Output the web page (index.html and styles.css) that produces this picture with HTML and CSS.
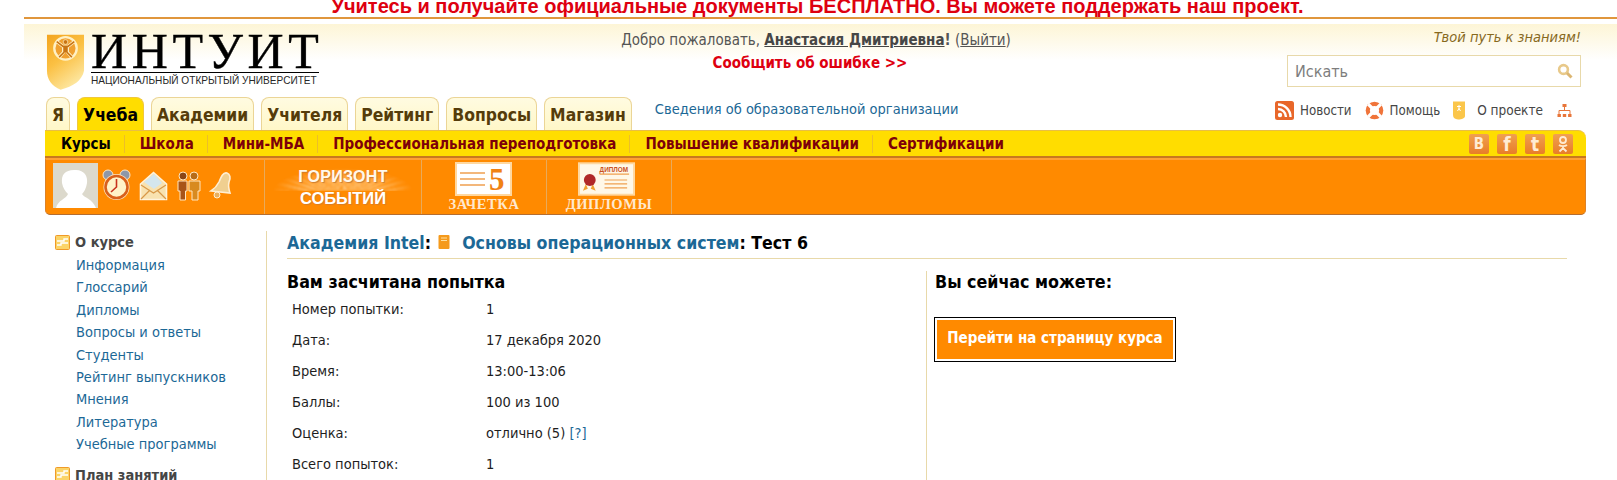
FILE: index.html
```html
<!DOCTYPE html>
<html lang="ru">
    <head>
        <meta charset="UTF-8">
        <meta name="viewport" content="width=device-width, initial-scale=1.0">
        <link rel="stylesheet" href="styles.css">
        <title>ИНТУИТ: Тест 6</title>
    </head>
    <body>
        <!--======================= promo =======================-->
        <div class="promo">Учитесь и получайте официальные документы БЕСПЛАТНО. Вы можете поддержать наш проект.</div>

        <div class="page">
            <!--======================= header =======================-->
            <header class="top">
                <a class="logo" href="#">
                    <svg class="logoShield" viewBox="0 0 40 58">
                        <defs>
                            <linearGradient id="shieldFill" x1="0" y1="0" x2="0.5" y2="1">
                                <stop offset="0" stop-color="#f3a41f"></stop>
                                <stop offset="0.5" stop-color="#fbc043"></stop>
                                <stop offset="1" stop-color="#fde59c"></stop>
                            </linearGradient>
                        </defs>
                        <path d="M1 1 H39 V38 C37 48 28 54 15 57.5 C6 54 1 47 1 38 Z" fill="url(#shieldFill)"></path>
                        <circle cx="20" cy="15" r="11.5" fill="#f0a030" stroke="#fff0c4" stroke-width="2.4"></circle>
                        <circle cx="20" cy="8.5" r="2.4" fill="#c87414" stroke="#fff0c4" stroke-width="0.7"></circle>
                        <path d="M11 8 L17.5 13 H22.5 L29 8 M18 13 V19 L13.5 24 M22 13 V19 L26.5 24" fill="none" stroke="#fff0c4" stroke-width="3.2"></path>
                        <path d="M11 8 L17.5 13 H22.5 L29 8 M18.5 13 V19 L13.5 24 M21.5 13 V19 L26.5 24 M20 12 V19" fill="none" stroke="#c87414" stroke-width="1.6"></path>
                    </svg>
                    <span class="logoText">
                        <span class="logoName">ИНТУИТ</span>
                        <span class="logoSub">НАЦИОНАЛЬНЫЙ ОТКРЫТЫЙ УНИВЕРСИТЕТ</span>
                    </span>
                </a>
                <div class="welcome">
                    <div class="welcomeLine">Добро пожаловать, <a class="userName" href="#">Анастасия Дмитриевна</a><b>!</b> (<a class="logout" href="#">Выйти</a>)</div>
                    <a class="report" href="#">Сообщить об ошибке &gt;&gt;</a>
                </div>
                <div class="topRight">
                    <div class="slogan">Твой путь к знаниям!</div>
                    <div class="search">
                        <span class="searchText">Искать</span>
                        <svg class="searchIcon" viewBox="0 0 16 16"><circle cx="6.5" cy="6.5" r="4.4" fill="none" stroke="#e8c98a" stroke-width="2.6"></circle><path d="M10 10 L14.5 14.5" stroke="#dcb672" stroke-width="3"></path></svg>
                    </div>
                </div>
            </header>

            <!--======================= tabs =======================-->
            <nav class="tabRow">
                <a class="tab tabMe" href="#">Я</a>
                <a class="tab tabActive" href="#">Учеба</a>
                <a class="tab" href="#">Академии</a>
                <a class="tab" href="#">Учителя</a>
                <a class="tab" href="#">Рейтинг</a>
                <a class="tab" href="#">Вопросы</a>
                <a class="tab" href="#">Магазин</a>
                <a class="orgLink" href="#">Сведения об образовательной организации</a>
                <div class="quickLinks">
                    <svg class="quickIcon" viewBox="0 0 19 19"><rect width="19" height="19" rx="2.5" fill="#e8672a"></rect><circle cx="5" cy="14" r="2.2" fill="#fff"></circle><path d="M3 8 A8 8 0 0 1 11 16 M3 3.5 A12.5 12.5 0 0 1 15.5 16" fill="none" stroke="#fff" stroke-width="2.4"></path></svg>
                    <a class="quickLink" href="#">Новости</a>
                    <svg class="quickIcon" viewBox="0 0 19 19"><circle cx="9.5" cy="9.5" r="8.8" fill="#f0743a"></circle><circle cx="9.5" cy="9.5" r="4.6" fill="#fff"></circle><path d="M3.2 3.2 L7 7 M15.8 3.2 L12 7 M3.2 15.8 L7 12 M15.8 15.8 L12 12" stroke="#fff" stroke-width="3.2"></path></svg>
                    <a class="quickLink quickHelp" href="#">Помощь</a>
                    <svg class="quickIcon quickBook" viewBox="0 0 14 19"><path d="M1 0.5 H13 V15 C13 17 10 18.5 6 18.5 C3 18 1 17 1 14 Z" fill="#fbc64a"></path><path d="M7 4 V8 M5 5.5 H9 M5.5 10 L7 7.5 L8.5 10" fill="none" stroke="#fff" stroke-width="1"></path></svg>
                    <a class="quickLink quickAbout" href="#">О проекте</a>
                    <svg class="quickIcon quickMap" viewBox="0 0 15 15"><path d="M7.5 4 V7.5 M2 11 V7.5 H13 V11" fill="none" stroke="#e8763a" stroke-width="1"></path><rect x="5.5" y="1" width="4" height="3" fill="#e8763a"></rect><rect x="0.5" y="11" width="3.4" height="3" fill="#e8763a"></rect><rect x="5.8" y="11" width="3.4" height="3" fill="#e8763a"></rect><rect x="11.1" y="11" width="3.4" height="3" fill="#e8763a"></rect></svg>
                </div>
            </nav>

            <!--======================= yellow menu =======================-->
            <div class="menu">
                <a class="menuItem menuCurrent" href="#">Курсы</a>
                <a class="menuItem" href="#">Школа</a>
                <a class="menuItem" href="#">Мини-МБА</a>
                <a class="menuItem" href="#">Профессиональная переподготовка</a>
                <a class="menuItem" href="#">Повышение квалификации</a>
                <a class="menuItem" href="#">Сертификации</a>
                <div class="social">
                    <a class="socialBtn" href="#">В</a>
                    <a class="socialBtn socialF" href="#">f</a>
                    <a class="socialBtn socialT" href="#">t</a>
                    <a class="socialBtn" href="#">
                        <svg class="okIcon" viewBox="0 0 20 20"><circle cx="10" cy="6" r="3" fill="none" stroke="#ffebd2" stroke-width="1.8"></circle><path d="M6 11 C8 12.5 12 12.5 14 11 M10 12 V14 M6.5 17.5 L10 14 L13.5 17.5" fill="none" stroke="#ffebd2" stroke-width="1.8"></path></svg>
                    </a>
                </div>
            </div>

            <!--======================= orange toolbar =======================-->
            <div class="tools">
                <div class="toolCell toolUser">
                    <svg class="avatar" viewBox="0 0 45 45">
                        <rect width="45" height="45" fill="#dcd9cc"></rect>
                        <path d="M21 7 C31 6 35 13 34 20 C33 26 31 29 29 31 C31 35 39 35 43 45 H3 C5 37 13 36 15 31 C12 28 10 25 9 20 C8 12 12 7 21 7 Z" fill="#fff"></path>
                    </svg>
                    <svg class="toolIcon iconClock" viewBox="0 0 29 33">
                        <circle cx="6" cy="6" r="5" fill="#8d97a8" stroke="#ffe6c0"></circle>
                        <circle cx="23" cy="6" r="5" fill="#8d97a8" stroke="#ffe6c0"></circle>
                        <circle cx="14.5" cy="18" r="13" fill="#ffe6c0"></circle>
                        <circle cx="14.5" cy="18" r="11" fill="#fff2c8" stroke="#d8601c" stroke-width="2.6"></circle>
                        <path d="M14.5 10 V18 L9 23" fill="none" stroke="#c8321e" stroke-width="1.6"></path>
                    </svg>
                    <svg class="toolIcon iconMail" viewBox="0 0 29 30">
                        <path d="M1.5 13 L14.5 1.5 L27.5 13 V28.5 H1.5 Z" fill="#f8e2b0" stroke="#fff3dc" stroke-width="1.6"></path>
                        <path d="M5 11 L15 3 L23 12 L15 18 Z" fill="#d4e6ee"></path>
                        <path d="M2 14 L14.5 22 L27 14 M2 28 L11 19 M27 28 L18 19" fill="none" stroke="#d89848" stroke-width="1.2"></path>
                    </svg>
                    <svg class="toolIcon iconPeople" viewBox="0 0 27 30">
                        <circle cx="8" cy="5" r="4" fill="#8a4616" stroke="#ffe6c0"></circle>
                        <circle cx="19" cy="5" r="4" fill="#b86c18" stroke="#ffe6c0"></circle>
                        <path d="M3 10 H12 V20 H10.5 V29 H5 V20 H3 Z" fill="#a85418" stroke="#ffe6c0"></path>
                        <path d="M14 10 H25 V20 H23 V29 H17 V20 H14 Z" fill="#d88a20" stroke="#ffe6c0"></path>
                    </svg>
                    <svg class="toolIcon iconBell" viewBox="0 0 26 29">
                        <path d="M19 2 C22 3 23 7 21 11 C20 15 21 19 22 22 L3 20 C6 18 9 15 11 11 C13 6 15 1 19 2 Z" fill="#f0cf90" stroke="#ffeed2" stroke-width="1.6"></path>
                        <circle cx="9" cy="24" r="3" fill="#e8b060" stroke="#ffeed2"></circle>
                    </svg>
                </div>
                <a class="toolCell toolHorizon" href="#">
                    <span class="horizonTop">ГОРИЗОНТ</span>
                    <span class="horizonBottom">СОБЫТИЙ</span>
                </a>
                <a class="toolCell toolBook" href="#">
                    <svg class="cardIcon" viewBox="0 0 57 34">
                        <rect x="1" y="1" width="55" height="32" fill="#fff" stroke="#ffd8a0" stroke-width="2"></rect>
                        <path d="M5 11 H30 M5 17 H30 M5 23 H30" stroke="#f0a050" stroke-width="1.5"></path>
                        <text class="cardFive" x="34" y="28">5</text>
                    </svg>
                    <span class="cardLabel">ЗАЧЕТКА</span>
                </a>
                <a class="toolCell toolDiploma" href="#">
                    <svg class="cardIcon" viewBox="0 0 58 34">
                        <rect x="1" y="1" width="56" height="32" fill="#fff8e8" stroke="#ffd8a0" stroke-width="2"></rect>
                        <text class="cardSmall" x="22" y="10">ДИПЛОМ</text>
                        <path d="M22 12 H52 M27 18 H50 M27 22 H50 M27 26 H50" stroke="#f0a050" stroke-width="1.2"></path>
                        <path d="M8 22 L5 29 L10 27 M15 22 L18 29 L13 27" fill="#f0a030"></path>
                        <circle cx="12" cy="18" r="6" fill="#b02828"></circle>
                    </svg>
                    <span class="cardLabel">ДИПЛОМЫ</span>
                </a>
            </div>

            <!--======================= content =======================-->
            <div class="content">
                <aside class="side">
                    <div class="sideHead">
                        <svg class="sideIcon" viewBox="0 0 15 15"><rect x="0.5" y="0.5" width="14" height="14" rx="1" fill="#fbd468" stroke="#f09a28"></rect><path d="M2 6 H9 V4 H13 M2 10 H6 V8 H13" fill="none" stroke="#fff" stroke-width="1.4"></path></svg>
                        <span>О курсе</span>
                    </div>
                    <ul class="sideList">
                        <li><a href="#">Информация</a></li>
                        <li><a href="#">Глоссарий</a></li>
                        <li><a href="#">Дипломы</a></li>
                        <li><a href="#">Вопросы и ответы</a></li>
                        <li><a href="#">Студенты</a></li>
                        <li><a href="#">Рейтинг выпускников</a></li>
                        <li><a href="#">Мнения</a></li>
                        <li><a href="#">Литература</a></li>
                        <li><a href="#">Учебные программы</a></li>
                    </ul>
                    <div class="sideHead">
                        <svg class="sideIcon" viewBox="0 0 15 15"><rect x="0.5" y="0.5" width="14" height="14" rx="1" fill="#fbd468" stroke="#f09a28"></rect><path d="M2 6 H9 V4 H13 M2 10 H6 V8 H13" fill="none" stroke="#fff" stroke-width="1.4"></path></svg>
                        <span>План занятий</span>
                    </div>
                </aside>

                <main class="main">
                    <h1 class="title">
                        <a href="#">Академия Intel</a>:
                        <svg class="titleIcon" viewBox="0 0 12 14"><rect x="0.5" width="11" height="14" rx="1" fill="#f59a1c"></rect><path d="M3 3 H9 M3 5.5 H9" stroke="#ffe0a0"></path></svg>
                        <a href="#">Основы операционных систем</a>: Тест 6
                    </h1>
                    <div class="columns">
                        <section class="attempt">
                            <h2 class="subTitle">Вам засчитана попытка</h2>
                            <div class="attemptGrid">
                                <span>Номер попытки:</span><span>1</span>
                                <span>Дата:</span><span>17 декабря 2020</span>
                                <span>Время:</span><span>13:00-13:06</span>
                                <span>Баллы:</span><span>100 из 100</span>
                                <span>Оценка:</span><span>отлично (5) <a href="#">[?]</a></span>
                                <span>Всего попыток:</span><span>1</span>
                            </div>
                        </section>
                        <section class="actions">
                            <h2 class="subTitle">Вы сейчас можете:</h2>
                            <a class="courseButton" href="#">Перейти на страницу курса</a>
                        </section>
                    </div>
                </main>
            </div>
        </div>
    </body>
</html>
```

FILE: styles.css
```css
html, body{
    height: 480px;
    overflow: hidden;
}

body{
    margin: 0;
    font-family: "DejaVu Sans Condensed", "DejaVu Sans", sans-serif;
    font-size: 14.5px;
    background-color: white;
    color: rgb(34, 34, 34);
}

a{
    text-decoration: none;
    color: rgb(28, 104, 150);
}

/*************************************************************************************************/

/* promo line */
.promo{
    height: 17px;
    line-height: 12px;
    overflow: hidden;
    padding-left: 18px;
    text-align: center;
    font-family: "Liberation Sans", sans-serif;
    font-weight: bold;
    font-size: 20px;
    color: rgb(222, 0, 16);
}

.page{
    margin-left: 24px;
    border-top: 2px solid rgb(224, 150, 60);
    padding-top: 5px;
}

/*************************************************************************************************/

/* header */
.top{
    display: grid;
    grid-template-columns: 299px 1fr 294px;
    height: 73px;
    padding: 0 36px 0 22px;
    background: linear-gradient(to bottom, rgb(253, 245, 214), white 50%);
}

.logo{
    display: flex;
    align-items: flex-start;
    gap: 6px;
    padding-top: 9px;
    color: black;
}

.logoShield{
    width: 39px;
    height: 58px;
}

.logoText{
    display: flex;
    flex-direction: column;
    width: 228px;
}

.logoName{
    font-family: "Liberation Serif", serif;
    font-size: 50px;
    line-height: 36px;
    letter-spacing: 4.6px;
    height: 39px;
    border-bottom: 1px solid black;
    -webkit-text-stroke: 0.4px black;
}

.logoSub{
    font-family: "Liberation Sans", sans-serif;
    font-size: 10.1px;
    line-height: 16px;
    white-space: nowrap;
    color: rgb(40, 40, 40);
}

.welcome{
    text-align: center;
    padding-top: 6px;
}

.welcomeLine{
    line-height: 20px;
    font-size: 15px;
    color: rgb(85, 85, 85);
}

.userName{
    font-weight: bold;
    color: rgb(70, 70, 70);
    text-decoration: underline;
}

.logout{
    color: rgb(85, 85, 85);
    text-decoration: underline;
}

.report{
    display: block;
    margin-top: 3px;
    padding-right: 12px;
    line-height: 20px;
    font-size: 15px;
    font-weight: bold;
    color: rgb(222, 0, 16);
}

.slogan{
    text-align: right;
    font-style: italic;
    line-height: 20px;
    padding-top: 3px;
    color: rgb(135, 105, 30);
}

.search{
    display: flex;
    align-items: center;
    justify-content: space-between;
    box-sizing: border-box;
    height: 32px;
    margin-top: 8px;
    padding: 0 7px;
    background-color: white;
    border: 1px solid rgb(232, 217, 170);
}

.searchText{
    font-size: 16px;
    color: rgb(125, 125, 125);
}

.searchIcon{
    width: 16px;
    height: 16px;
}

/*************************************************************************************************/

/* tabs */
.tabRow{
    display: flex;
    align-items: flex-start;
    height: 33px;
    padding: 0 45px 0 22px;
}

.tab{
    box-sizing: border-box;
    height: 33px;
    margin-right: 7px;
    padding: 0 5px;
    line-height: 34px;
    font-weight: bold;
    font-size: 17.4px;
    color: rgb(85, 60, 10);
    background: linear-gradient(to bottom, rgb(255, 251, 225), rgb(255, 247, 200));
    border: 1px solid rgb(235, 213, 150);
    border-bottom: none;
    border-radius: 8px 8px 0 0;
}

.tabActive{
    color: black;
    background: rgb(255, 221, 0);
    border-color: rgb(240, 200, 60);
}

.orgLink{
    margin-left: 16px;
    line-height: 25px;
}

.quickLinks{
    display: flex;
    align-items: center;
    margin-left: auto;
    height: 26px;
    font-size: 13.2px;
}

.quickIcon{
    width: 19px;
    height: 19px;
}

.quickBook{
    width: 14px;
}

.quickMap{
    width: 15px;
    height: 15px;
    margin-left: 14px;
}

.quickLink{
    margin: 0 13px 0 6px;
    color: rgb(70, 70, 70);
}

.quickHelp{
    margin-right: 12px;
}

.quickAbout{
    margin: 0 0 0 11px;
    font-size: 13.5px;
}

/*************************************************************************************************/

/* yellow menu */
.menu{
    display: flex;
    align-items: center;
    box-sizing: border-box;
    height: 28px;
    margin: 0 31px 0 21px;
    padding-left: 1px;
    background-color: rgb(255, 221, 0);
    border-top: 1px solid rgb(232, 190, 70);
    border-bottom: 2px solid rgb(200, 120, 30);
    border-radius: 0 8px 0 0;
}

.menuItem{
    height: 18px;
    line-height: 18px;
    padding: 0 13px 0 15px;
    font-weight: bold;
    font-size: 15px;
    color: rgb(125, 0, 10);
    border-right: 1px solid rgb(236, 190, 40);
}

.menuCurrent{
    color: black;
}

.menuItem:nth-child(6){
    border-right: none;
}

.social{
    display: flex;
    gap: 8px;
    margin-left: auto;
    margin-right: 13px;
}

.socialBtn{
    display: block;
    width: 20px;
    height: 20px;
    line-height: 20px;
    text-align: center;
    font-weight: bold;
    font-size: 15px;
    color: rgb(255, 235, 210);
    background: linear-gradient(to bottom, rgb(240, 160, 80), rgb(232, 125, 40));
    border-radius: 2px;
}

.socialF{
    font-size: 19px;
}

.socialT{
    font-size: 19px;
}

.okIcon{
    display: block;
    width: 20px;
    height: 20px;
}

/*************************************************************************************************/

/* orange toolbar */
.tools{
    display: flex;
    box-sizing: border-box;
    height: 57px;
    margin: 0 31px 0 21px;
    background-color: rgb(255, 138, 0);
    border-top: 2px solid rgb(255, 160, 50);
    border-left: 1px solid rgb(220, 130, 40);
    border-right: 1px solid rgb(220, 130, 40);
    border-bottom: 1px solid rgb(180, 110, 50);
    border-radius: 0 0 5px 5px;
}

.toolCell{
    box-sizing: border-box;
    height: 54px;
    border-right: 1px solid rgb(232, 170, 90);
}

.toolUser{
    display: flex;
    align-items: center;
    width: 219px;
    padding: 0 0 3px 7px;
}

.avatar{
    width: 45px;
    height: 45px;
    margin-right: 4px;
}

.toolIcon{
    flex: none;
}

.iconClock{
    width: 29px;
    height: 33px;
    margin-right: 8px;
}

.iconMail{
    width: 29px;
    height: 30px;
    margin-right: 7px;
}

.iconPeople{
    width: 27px;
    height: 30px;
    margin-right: 6px;
}

.iconBell{
    width: 26px;
    height: 29px;
}

.toolHorizon{
    position: relative;
    display: flex;
    flex-direction: column;
    align-items: center;
    width: 157px;
    padding-top: 8px;
    font-family: "Liberation Sans", sans-serif;
    font-weight: bold;
    color: white;
}

/* rays behind the horizon title */
.toolHorizon::before{
    content: "";
    position: absolute;
    left: 8px;
    right: 8px;
    top: 4px;
    height: 27px;
    filter: blur(1px);
    background: repeating-conic-gradient(from 270deg at 50% 130%, rgba(255, 235, 200, 0.6) 0deg 3deg, rgba(255, 235, 200, 0.15) 3deg 6deg);
    -webkit-mask-image: radial-gradient(ellipse 50% 85% at 50% 100%, black 50%, transparent 100%);
    mask-image: radial-gradient(ellipse 50% 85% at 50% 100%, black 50%, transparent 100%);
}

.horizonTop{
    position: relative;
    font-size: 16px;
    line-height: 18px;
    letter-spacing: 0.3px;
    color: rgb(255, 248, 235);
    text-shadow: 1px 1px 1px rgb(205, 125, 50);
}

.horizonBottom{
    position: relative;
    margin-top: 3px;
    font-size: 16.5px;
    line-height: 18px;
    text-shadow: 1px 1px 1px rgb(215, 125, 40);
}

.toolBook, .toolDiploma{
    display: flex;
    flex-direction: column;
    align-items: center;
    padding-top: 2px;
    color: rgb(255, 232, 205);
}

.toolBook{
    width: 125px;
}

.toolDiploma{
    width: 125px;
}

.cardIcon{
    width: 57px;
    height: 34px;
}

.toolBook .cardIcon{
    margin-right: 2px;
}

.toolDiploma .cardIcon{
    margin-right: 5px;
}

.cardFive{
    font-family: "Liberation Serif", serif;
    font-weight: bold;
    font-size: 31px;
    fill: rgb(240, 130, 20);
}

.cardSmall{
    font-family: "Liberation Sans", sans-serif;
    font-weight: bold;
    font-size: 6.5px;
    fill: rgb(200, 80, 30);
}

.cardLabel{
    font-family: "Liberation Serif", serif;
    font-weight: bold;
    font-size: 14.5px;
    line-height: 17px;
    letter-spacing: 0.6px;
}

/*************************************************************************************************/

/* content */
.content{
    display: flex;
    margin: 16px 50px 0 21px;
}

.side{
    box-sizing: border-box;
    width: 222px;
    height: 260px;
    padding-left: 10px;
    border-right: 1px solid rgb(232, 217, 170);
}

.sideHead{
    display: flex;
    align-items: center;
    gap: 5px;
    height: 22px;
    font-weight: bold;
    color: rgb(70, 70, 70);
}

.sideIcon{
    width: 15px;
    height: 15px;
}

.sideList{
    list-style: none;
    margin: 1px 0 8px 0;
    padding: 0 0 0 21px;
}

.sideList li{
    height: 22.4px;
    line-height: 22.4px;
}

.main{
    flex: 1;
    padding-left: 20px;
}

.title{
    margin: 0;
    height: 27px;
    line-height: 25px;
    font-size: 17.6px;
    font-weight: bold;
    color: black;
    border-bottom: 1px solid rgb(232, 217, 170);
}

.titleIcon{
    width: 12px;
    height: 14px;
    margin: 0 7px 0 1px;
}

.columns{
    display: flex;
    margin-top: 12px;
}

.attempt{
    box-sizing: border-box;
    width: 640px;
    height: 230px;
    border-right: 1px solid rgb(232, 217, 170);
}

.subTitle{
    margin: 0;
    line-height: 23px;
    font-size: 17.7px;
    font-weight: bold;
    color: black;
}

.attemptGrid{
    display: grid;
    grid-template-columns: 194px 1fr;
    grid-auto-rows: 31px;
    align-items: center;
    margin-top: -1px;
    padding-left: 5px;
    color: rgb(30, 30, 30);
}

.actions{
    padding-left: 8px;
}

.courseButton{
    display: block;
    box-sizing: border-box;
    width: 240px;
    height: 43px;
    margin-top: 24px;
    line-height: 37px;
    text-align: center;
    font-weight: bold;
    font-size: 15px;
    color: white;
    background-color: rgb(255, 138, 0);
    border: 2px solid white;
    outline: 1px solid black;
    outline-offset: 0;
}
```
